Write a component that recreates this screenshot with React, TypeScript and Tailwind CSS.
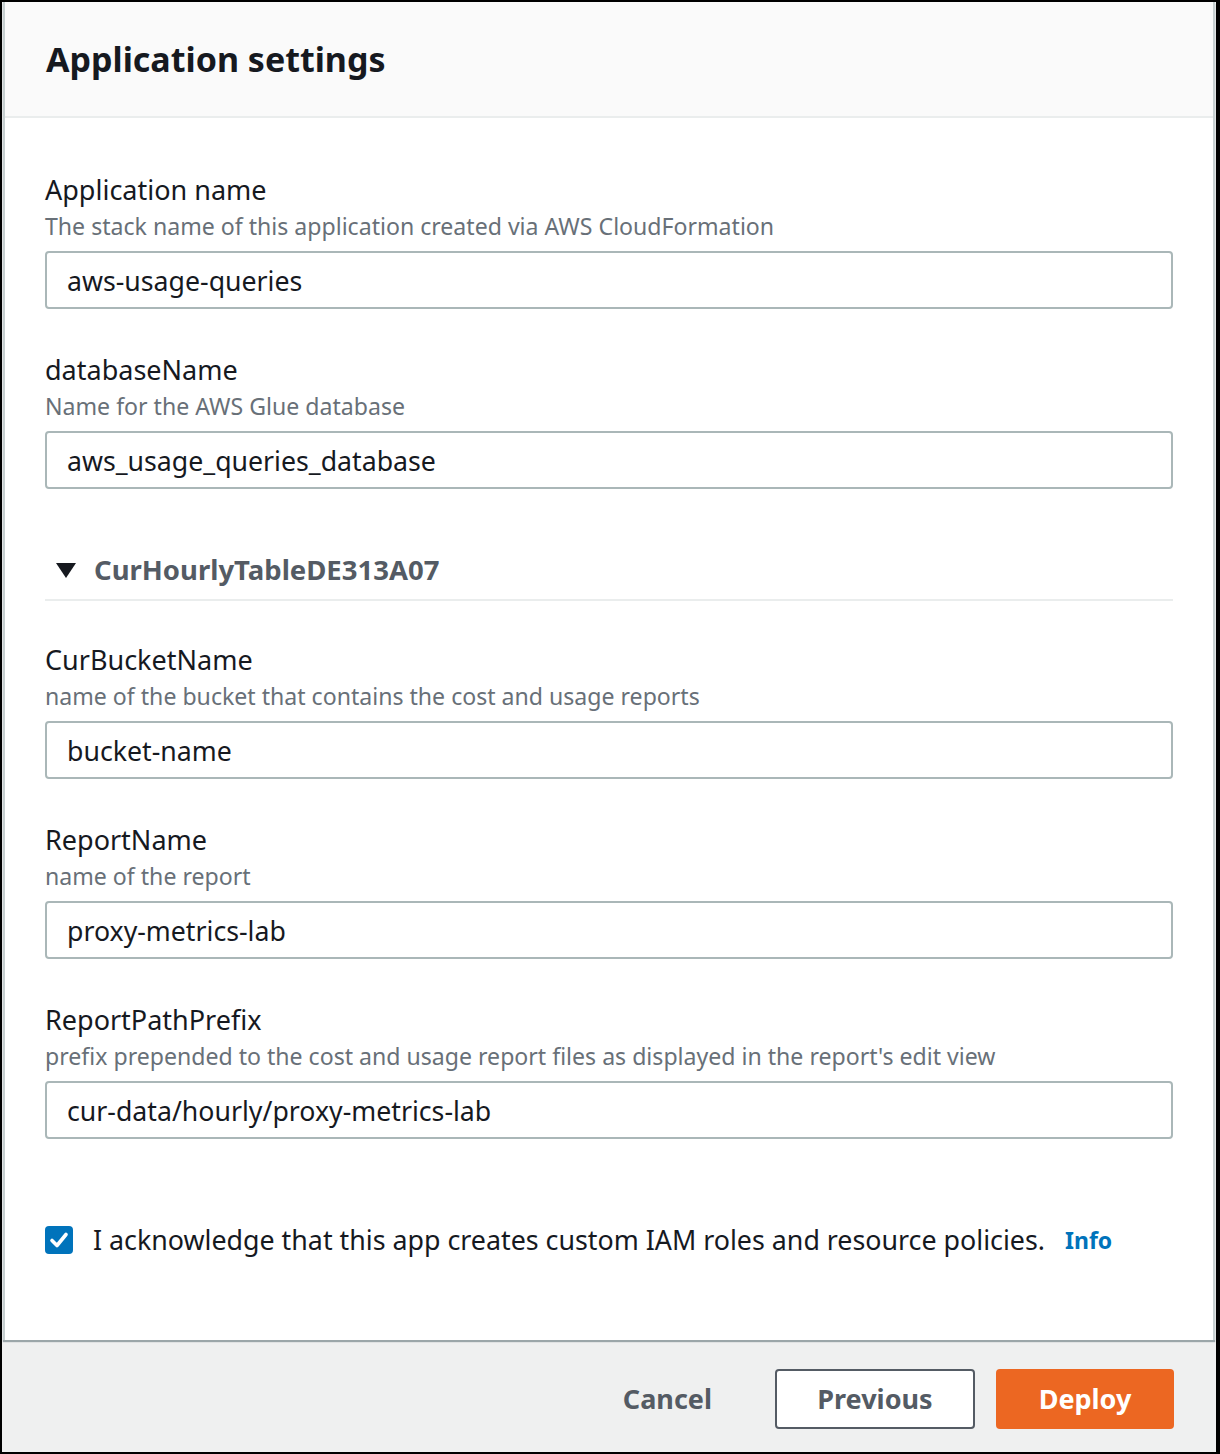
import { useState } from 'react';

type Field = {
  label: string;
  description: string;
  value: string;
};

const topFields: Field[] = [
  {
    label: 'Application name',
    description: 'The stack name of this application created via AWS CloudFormation',
    value: 'aws-usage-queries',
  },
  {
    label: 'databaseName',
    description: 'Name for the AWS Glue database',
    value: 'aws_usage_queries_database',
  },
];

const tableFields: Field[] = [
  {
    label: 'CurBucketName',
    description: 'name of the bucket that contains the cost and usage reports',
    value: 'bucket-name',
  },
  {
    label: 'ReportName',
    description: 'name of the report',
    value: 'proxy-metrics-lab',
  },
  {
    label: 'ReportPathPrefix',
    description:
      "prefix prepended to the cost and usage report files as displayed in the report's edit view",
    value: 'cur-data/hourly/proxy-metrics-lab',
  },
];

function FormField({ field }: { field: Field }) {
  const [value, setValue] = useState(field.value);
  return (
    <div>
      <div className="text-[27px] leading-[36px] text-[#16191f]">{field.label}</div>
      <div className="text-[23.1px] leading-[36px] text-[#687078]">{field.description}</div>
      <input
        type="text"
        value={value}
        onChange={(e) => setValue(e.target.value)}
        className="mt-[7px] box-border block h-[58px] w-full rounded-[4px] border-2 border-[#aab7b8] bg-white px-[20px] text-[26.7px] text-[#16191f] outline-none"
      />
    </div>
  );
}

export default function App() {
  const [open, setOpen] = useState(true);
  const [ack, setAck] = useState(true);

  return (
    <div
      className="flex h-[1454px] w-[1220px] flex-col border-t-2 border-b-2 border-l-2 border-r-4 border-black bg-[#eff0f0]"
      style={{ fontFamily: '"Noto Sans", "Open Sans", Arial, sans-serif' }}
    >
      {/* main card */}
      <div className="ml-[1px] mr-[1px] border-x-2 border-[#c6cfd0] bg-white shadow-[0_2px_1px_0_rgba(0,28,36,0.35)]">
        <div className="flex h-[116px] items-center border-b-2 border-[#eaeded] bg-[#fafafa] px-[41px]">
          <h2 className="text-[34px] font-bold text-[#16191f]">Application settings</h2>
        </div>

        <div className="px-[40px] pt-[54px] pb-[80px]">
          <div className="flex flex-col gap-[43px]">
            {topFields.map((f) => (
              <FormField key={f.label} field={f} />
            ))}
          </div>

          {/* expandable section */}
          <div className="mt-[61px]">
            <button
              onClick={() => setOpen(!open)}
              className="flex h-[40px] w-full items-center gap-[18px] pl-[11px] text-left"
            >
              <svg width="20" height="16" viewBox="0 0 20 16" className={open ? '' : '-rotate-90'}>
                <polygon points="0,1 20,1 10,16" fill="#16191f" />
              </svg>
              <span className="text-[27.5px] font-bold text-[#545b64]">CurHourlyTableDE313A07</span>
            </button>
            <div className="mt-[9px] h-[2px] bg-[#eaeded]" />
          </div>

          {open && (
            <div className="mt-[41px] flex flex-col gap-[43px]">
              {tableFields.map((f) => (
                <FormField key={f.label} field={f} />
              ))}
            </div>
          )}

          {/* acknowledgement */}
          <div className="mt-[81px] flex h-[40px] items-center">
            <button
              onClick={() => setAck(!ack)}
              className={`flex h-[28px] w-[28px] shrink-0 items-center justify-center rounded-[4px] ${
                ack ? 'bg-[#0073bb]' : 'border-2 border-[#aab7b8] bg-white'
              }`}
            >
              {ack && (
                <svg width="20" height="20" viewBox="0 0 20 20">
                  <polyline
                    points="3,10.5 8,15.5 17,4.5"
                    fill="none"
                    stroke="white"
                    strokeWidth="3.6"
                    strokeLinecap="round"
                    strokeLinejoin="round"
                  />
                </svg>
              )}
            </button>
            <span className="ml-[20px] text-[26.8px] leading-[40px] text-[#16191f]">
              I acknowledge that this app creates custom IAM roles and resource policies.
            </span>
            <a href="#" className="ml-[20px] text-[23px] font-bold text-[#0073bb]">
              Info
            </a>
          </div>
        </div>
      </div>

      {/* footer */}
      <div className="flex flex-1 items-center justify-end pt-[6px] pr-[42px]">
        <button className="mr-[63px] text-[27px] font-bold text-[#545b64]">Cancel</button>
        <button className="mr-[21px] h-[60px] w-[200px] rounded-[4px] border-2 border-[#545b64] bg-white text-[27px] font-bold text-[#545b64]">
          Previous
        </button>
        <button className="h-[60px] w-[178px] rounded-[4px] bg-[#ec6722] text-[27px] font-bold text-white">
          Deploy
        </button>
      </div>
    </div>
  );
}
